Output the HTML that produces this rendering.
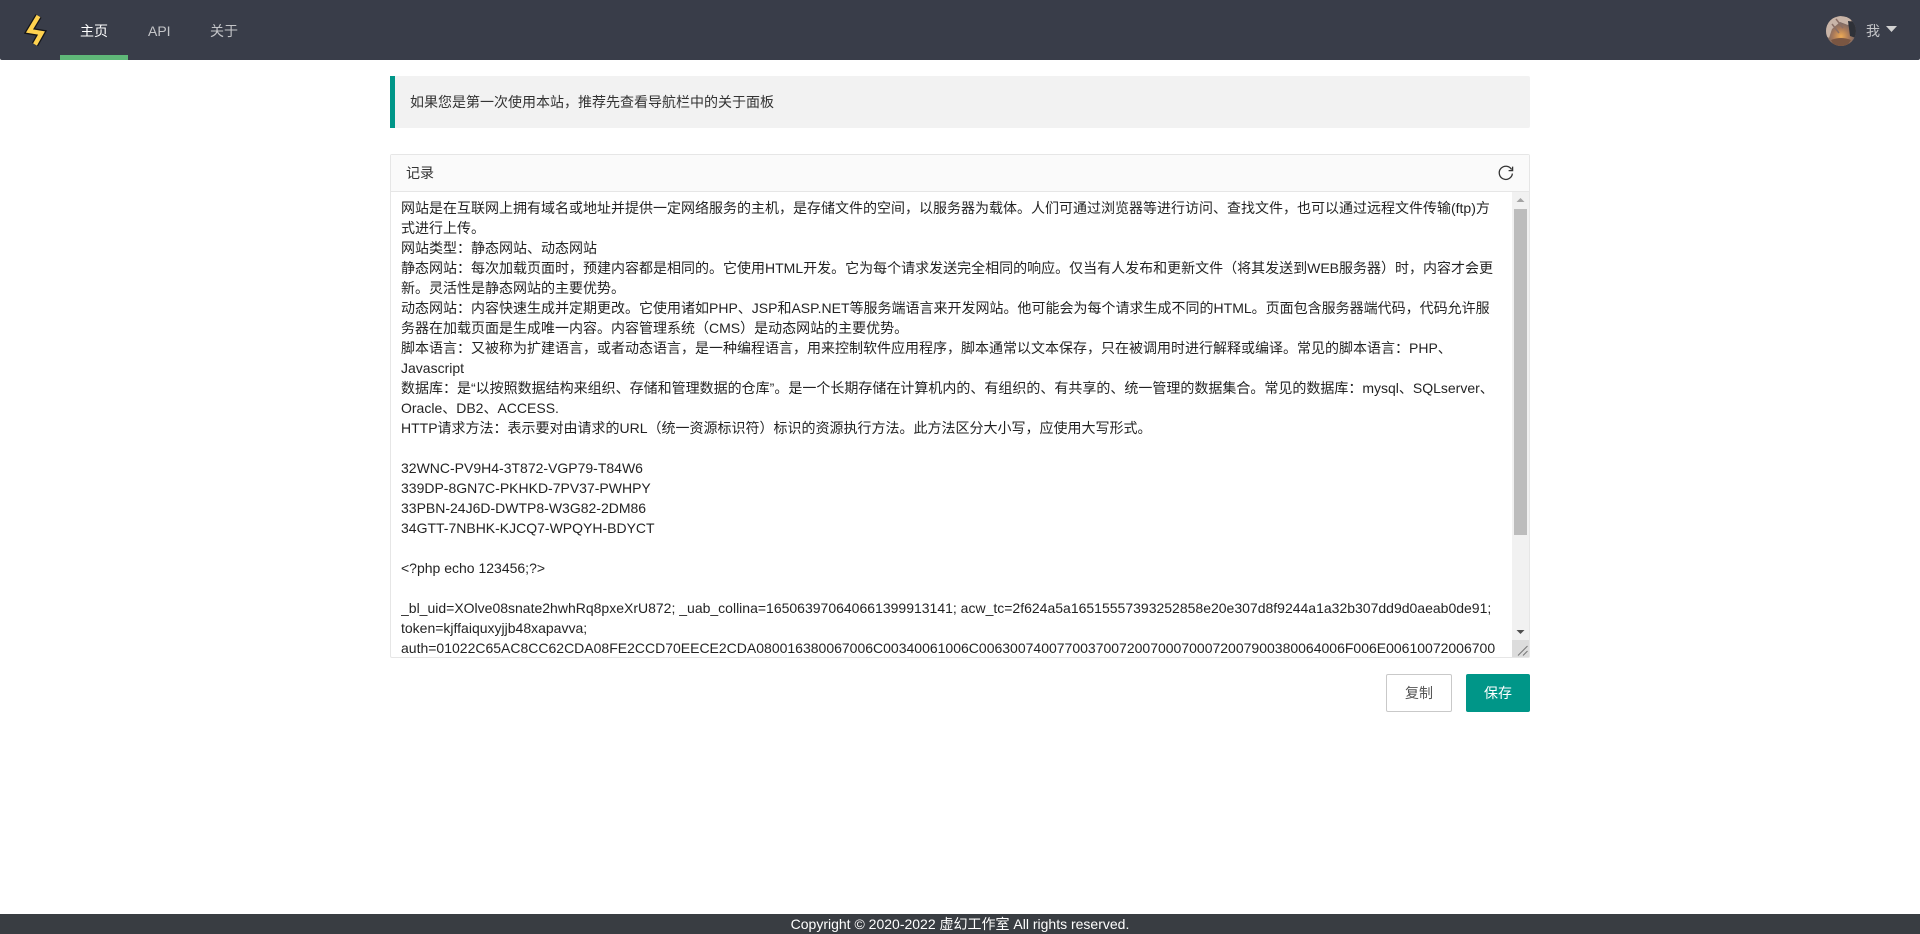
<!DOCTYPE html>
<html lang="zh-CN">
<head>
<meta charset="utf-8">
<title>记录</title>
<style>
html,body{margin:0;padding:0;width:1920px;height:934px;overflow:hidden;background:#fff;font-family:"Liberation Sans","Noto Sans CJK SC",sans-serif;font-size:14px;color:#333}
.abs{position:absolute}
#hd{left:0;top:0;width:1920px;height:60px;background:#393d49;border-radius:0 0 2px 2px}
#bar{left:60px;top:55px;width:68px;height:5px;background:#5fb878}
.nav{top:21px;height:20px;line-height:20px;white-space:nowrap;color:rgba(255,255,255,.7)}
#alert{left:390px;top:76px;width:1135px;height:52px;line-height:52px;background:#f2f2f2;border-left:5px solid #009688;border-radius:0 2px 2px 0}
#alert span{position:absolute;left:15px;top:0;color:#333;white-space:nowrap}
#card{left:390px;top:154px;width:1138px;height:502px;border:1px solid #e6e6e6;border-radius:2px;background:#fff}
#ch{left:0;top:0;width:1138px;height:36px;background:#fafafa;border-bottom:1px solid #e6e6e6;line-height:36px}
#ch span{position:absolute;left:15px;top:0;color:#333}
#txt{left:10px;top:43px;width:1115px;height:459px;overflow:hidden;color:rgba(0,0,0,.87)}
#txt div{height:20px;line-height:20px;white-space:nowrap}
#sb{left:1121px;top:37px;width:17px;height:465px;background:#f1f1f1}
#th{left:2px;top:17px;width:13px;height:326px;background:#bcbcbc}
#rz{left:0;top:448px;width:17px;height:17px;background:#dcdcdc}
.btn{top:674px;height:38px;line-height:38px;text-align:center;border-radius:2px;box-sizing:border-box;font-size:14px}
#copy{left:1386px;width:66px;background:#fff;border:1px solid #c9c9c9;color:#555;line-height:37px}
#save{left:1466px;width:64px;background:#009688;color:#fff}
#ft{left:0;top:914px;width:1920px;height:20px;line-height:20px;background:#393d42;color:#fff;text-align:center;font-size:14px;white-space:nowrap}
</style>
</head>
<body>
<div class="abs" id="hd"></div>
<svg class="abs" style="left:20px;top:10px" width="30" height="40" viewBox="20 10 30 40" fill="none" stroke-linejoin="miter" stroke-linecap="butt">
<path d="M38.5 16 L29.5 31 L41.5 33 L35 44.5" stroke="#14151a" stroke-width="7"/>
<path d="M38.5 16 L29.5 31 L41.5 33 L35 44.5" stroke="#ffd24f" stroke-width="4.4"/>
</svg>
<div class="abs" id="bar"></div>
<div class="abs nav" style="left:80px;color:#fff">主页</div>
<div class="abs nav" style="left:148px">API</div>
<div class="abs nav" style="left:210px">关于</div>
<svg class="abs" style="left:1826px;top:16px" width="30" height="30" viewBox="0 0 30 30">
<defs>
<clipPath id="c"><circle cx="15" cy="15" r="15"/></clipPath>
<radialGradient id="g" cx=".5" cy=".68" r=".45"><stop offset="0" stop-color="#eeaa55"/><stop offset=".6" stop-color="#a8795a"/><stop offset="1" stop-color="#7d6a64"/></radialGradient>
</defs>
<g clip-path="url(#c)">
<rect width="30" height="30" fill="url(#g)"/>
<path d="M0 4 L14 0 L27 2 L22 9 L14 6 L6 13 L3 22 L0 20 Z" fill="#c9b5a8"/>
<path d="M10 3 L17 12 M6 8 L13 17" stroke="#8a6f66" stroke-width="1.5"/>
<path d="M22 5 L30 6 L30 22 L24 20 Z" fill="#2e3138"/>
<path d="M5 24 Q15 20 25 24 L21 30 L8 30 Z" fill="#7a5642"/>
</g>
</svg>
<div class="abs nav" style="left:1866px">我</div>
<svg class="abs" style="left:1885px;top:26px" width="13" height="7" viewBox="0 0 13 7"><path d="M1 0 H12 L6.5 6 Z" fill="#d2d2d2"/></svg>

<div class="abs" id="alert"><span>如果您是第一次使用本站，推荐先查看导航栏中的关于面板</span></div>

<div class="abs" id="card">
  <div class="abs" id="ch"><span>记录</span>
    <svg class="abs" style="left:1106px;top:9px" width="18" height="18" viewBox="0 0 18 18" fill="none"><path d="M14.6 5.6 A6.6 6.6 0 1 0 15.4 9.6" stroke="#333" stroke-width="1.3"/><path d="M15.6 2.6 V6.6 H11.6" stroke="#333" stroke-width="1.3"/></svg>
  </div>
  <div class="abs" id="txt">
<div>网站是在互联网上拥有域名或地址并提供一定网络服务的主机，是存储文件的空间，以服务器为载体。人们可通过浏览器等进行访问、查找文件，也可以通过远程文件传输(ftp)方</div>
<div>式进行上传。</div>
<div>网站类型：静态网站、动态网站</div>
<div>静态网站：每次加载页面时，预建内容都是相同的。它使用HTML开发。它为每个请求发送完全相同的响应。仅当有人发布和更新文件（将其发送到WEB服务器）时，内容才会更</div>
<div>新。灵活性是静态网站的主要优势。</div>
<div>动态网站：内容快速生成并定期更改。它使用诸如PHP、JSP和ASP.NET等服务端语言来开发网站。他可能会为每个请求生成不同的HTML。页面包含服务器端代码，代码允许服</div>
<div>务器在加载页面是生成唯一内容。内容管理系统（CMS）是动态网站的主要优势。</div>
<div>脚本语言：又被称为扩建语言，或者动态语言，是一种编程语言，用来控制软件应用程序，脚本通常以文本保存，只在被调用时进行解释或编译。常见的脚本语言：PHP、</div>
<div>Javascript</div>
<div>数据库：是“以按照数据结构来组织、存储和管理数据的仓库”。是一个长期存储在计算机内的、有组织的、有共享的、统一管理的数据集合。常见的数据库：mysql、SQLserver、</div>
<div>Oracle、DB2、ACCESS.</div>
<div>HTTP请求方法：表示要对由请求的URL（统一资源标识符）标识的资源执行方法。此方法区分大小写，应使用大写形式。</div>
<div></div>
<div>32WNC-PV9H4-3T872-VGP79-T84W6</div>
<div>339DP-8GN7C-PKHKD-7PV37-PWHPY</div>
<div>33PBN-24J6D-DWTP8-W3G82-2DM86</div>
<div>34GTT-7NBHK-KJCQ7-WPQYH-BDYCT</div>
<div></div>
<div>&lt;?php echo 123456;?&gt;</div>
<div></div>
<div>_bl_uid=XOlve08snate2hwhRq8pxeXrU872; _uab_collina=165063970640661399913141; acw_tc=2f624a5a16515557393252858e20e307d8f9244a1a32b307dd9d0aeab0de91;</div>
<div>token=kjffaiquxyjjb48xapavva;</div>
<div>auth=01022C65AC8CC62CDA08FE2CCD70EECE2CDA080016380067006C00340061006C00630074007700370072007000700072007900380064006F006E00610072006700</div>
  </div>
  <div class="abs" id="sb">
    <svg class="abs" style="left:0;top:0" width="17" height="17" viewBox="0 0 17 17"><path d="M4.5 10 H12.5 L8.5 6 Z" fill="#a3a3a3"/></svg>
    <div class="abs" id="th"></div>
    <svg class="abs" style="left:0;top:431px" width="17" height="17" viewBox="0 0 17 17"><path d="M4.5 7 H12.5 L8.5 11 Z" fill="#505050"/></svg>
    <div class="abs" id="rz"></div>
    <svg class="abs" style="left:0;top:448px" width="17" height="17" viewBox="0 0 17 17" fill="none" stroke="#777" stroke-width="1"><path d="M6 15.5 L15.5 6"/><path d="M11 15.5 L15.5 11"/></svg>
  </div>
</div>

<div class="abs btn" id="copy">复制</div>
<div class="abs btn" id="save">保存</div>
<div class="abs" id="ft">Copyright © 2020-2022 虚幻工作室 All rights reserved.</div>
</body>
</html>
